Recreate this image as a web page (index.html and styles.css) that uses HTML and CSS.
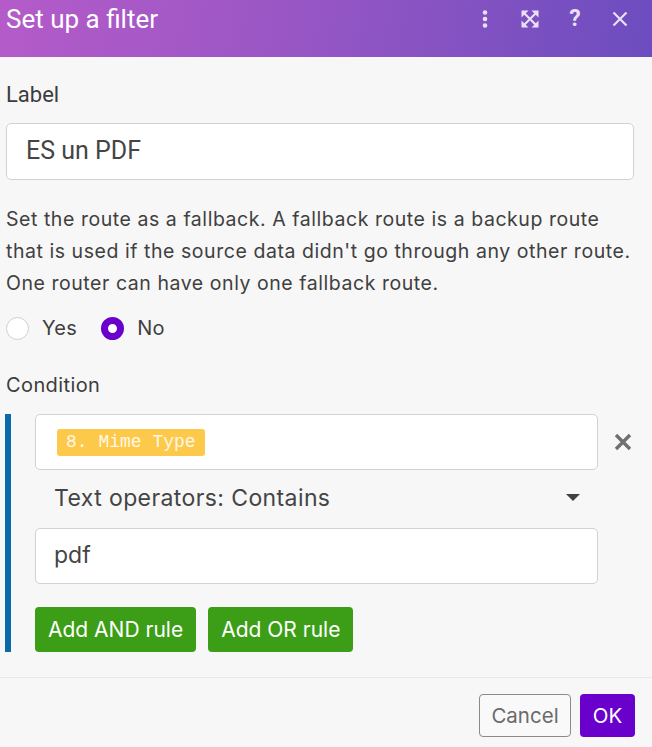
FILE: index.html
```html
<!DOCTYPE html>
<html lang="en">
<head>
<meta charset="utf-8">
<title>Set up a filter</title>
<link rel="stylesheet" href="styles.css">
</head>
<body>
<div class="dialog">
  <header class="header">
    <h1 class="title">Set up a filter</h1>
    <div class="header-icons">
      <span class="hicon">
        <svg width="20" height="20" viewBox="0 0 20 20"><circle cx="10" cy="3.5" r="2.3" fill="currentColor"/><circle cx="10" cy="10" r="2.3" fill="currentColor"/><circle cx="10" cy="16.5" r="2.3" fill="currentColor"/></svg>
      </span>
      <span class="hicon">
        <svg width="20" height="20" viewBox="0 0 20 20"><path d="M4.5 4.5 L15.5 15.5 M15.5 4.5 L4.5 15.5" stroke="currentColor" stroke-width="2.2" fill="none"/><path d="M1.5 1.5 H8.5 L1.5 8.5 Z M18.5 1.5 V8.5 L11.5 1.5 Z M18.5 18.5 H11.5 L18.5 11.5 Z M1.5 18.5 V11.5 L8.5 18.5 Z" fill="currentColor"/></svg>
      </span>
      <span class="hicon q">?</span>
      <span class="hicon">
        <svg width="20" height="20" viewBox="0 0 20 20" fill="none" stroke="currentColor" stroke-width="2.2"><path d="M3.5 3.5 L16.5 16.5 M16.5 3.5 L3.5 16.5"/></svg>
      </span>
    </div>
  </header>

  <main class="content">
    <div class="field-label">Label</div>
    <div class="text-input">ES un PDF</div>

    <p class="help">Set the route as a fallback. A fallback route is a backup route that is used if the source data didn't go through any other route. One router can have only one fallback route.</p>

    <div class="radios">
      <label class="radio"><span class="radio-dot"></span>Yes</label>
      <label class="radio"><span class="radio-dot checked"></span>No</label>
    </div>

    <div class="cond-label">Condition</div>

    <div class="condition">
      <div class="rule-row">
        <div class="rule-field"><span class="tag">8. Mime Type</span></div>
        <button class="remove" type="button" aria-label="Remove">
          <svg width="20" height="20" viewBox="0 0 20 20" fill="none" stroke="currentColor" stroke-width="3.4"><path d="M3 3 L17 17 M17 3 L3 17"/></svg>
        </button>
      </div>
      <div class="operator">
        <span>Text operators: Contains</span>
        <span class="caret"></span>
      </div>
      <div class="rule-value">pdf</div>
      <div class="rule-actions">
        <button class="btn-green" type="button">Add AND rule</button>
        <button class="btn-green" type="button">Add OR rule</button>
      </div>
    </div>
  </main>

  <footer class="footer">
    <button class="btn-cancel" type="button">Cancel</button>
    <button class="btn-ok" type="button">OK</button>
  </footer>
</div>
</body>
</html>
```

FILE: styles.css
```css
* { box-sizing: border-box; }
html, body {
  margin: 0;
  padding: 0;
  background: #f7f7f7;
}
body {
  font-family: Inter, "Noto Sans", sans-serif;
  color: #404040;
  width: 652px;
  height: 747px;
  overflow: hidden;
}
.header {
  height: 57px;
  background: linear-gradient(100deg, #b45bc9 0%, #9c57c5 40%, #6c4dbf 100%);
  display: flex;
  align-items: flex-start;
  justify-content: space-between;
  padding: 1px 22px 0 6px;
  color: #fff;
}
.title {
  margin: 0;
  font-family: Roboto, sans-serif;
  font-weight: 400;
  font-size: 26px;
  line-height: 36px;
}
.header-icons {
  display: flex;
  align-items: center;
  gap: 25px;
  height: 36px;
  color: #eadff7;
}
.hicon {
  width: 20px;
  height: 20px;
  display: flex;
  align-items: center;
  justify-content: center;
}
.hicon.q {
  font-family: Roboto, sans-serif;
  font-weight: 700;
  font-size: 23px;
  line-height: 20px;
}
.content {
  padding: 0 18px 0 6px;
}
.field-label {
  margin-top: 24px;
  font-family: Roboto, sans-serif;
  font-size: 22px;
  line-height: 28px;
  color: #3c3c3c;
}
.text-input {
  margin-top: 14px;
  height: 57px;
  background: #fff;
  border: 1px solid #d2d2d2;
  border-radius: 5px;
  padding: 0 19px 2px;
  display: flex;
  align-items: center;
  font-family: Roboto, sans-serif;
  font-size: 25px;
  color: #454545;
}
.help {
  margin: 23px 0 0;
  font-size: 19.5px;
  line-height: 32px;
  letter-spacing: 0.55px;
  color: #404040;
}
.radios {
  margin-top: 14px;
  display: flex;
  gap: 24px;
  height: 30px;
  align-items: center;
}
.radio {
  display: flex;
  align-items: center;
  gap: 13px;
  font-size: 20px;
  letter-spacing: 0.3px;
  color: #404040;
}
.radio-dot {
  width: 23px;
  height: 23px;
  border-radius: 50%;
  background: #fff;
  border: 1px solid #cfcfcf;
}
.radio-dot.checked {
  border: 7px solid #6a00cc;
  background: #fff;
}
.cond-label {
  margin-top: 28px;
  font-size: 20px;
  line-height: 28px;
  letter-spacing: 0.4px;
  color: #3c3c3c;
}
.condition {
  margin-top: 15px;
  margin-left: -1px;
  margin-right: -18px;
  border-left: 6px solid #0a6aa9;
  padding-left: 24px;
}
.rule-row {
  display: flex;
  align-items: stretch;
}
.rule-field {
  flex: 1;
  height: 56px;
  background: #fff;
  border: 1px solid #d2d2d2;
  border-radius: 5px;
  display: flex;
  align-items: center;
  padding-left: 21px;
}
.tag {
  background: #fdc94b;
  color: #fff8e6;
  font-family: "Liberation Mono", "Courier New", monospace;
  font-size: 18px;
  line-height: 27px;
  padding: 0 9px;
  border-radius: 3px;
}
.remove {
  width: 54px;
  border: 0;
  background: none;
  color: #707070;
  display: flex;
  align-items: flex-start;
  justify-content: center;
  padding: 18px 4px 0 0;
}
.operator {
  height: 58px;
  margin-right: 54px;
  display: flex;
  align-items: center;
  justify-content: space-between;
  padding: 0 18px 3px 19px;
  font-size: 23px;
  letter-spacing: 0.4px;
  color: #444;
}
.caret {
  width: 0;
  height: 0;
  border-left: 7px solid transparent;
  border-right: 7px solid transparent;
  border-top: 7px solid #404040;
}
.rule-value {
  margin-right: 54px;
  height: 56px;
  background: #fff;
  border: 1px solid #d2d2d2;
  border-radius: 5px;
  display: flex;
  align-items: center;
  padding: 0 18px 3px;
  font-size: 23px;
  color: #444;
}
.rule-actions {
  margin-top: 23px;
  display: flex;
  gap: 12px;
}
.btn-green {
  height: 45px;
  padding: 0 13px;
  border: 0;
  border-radius: 4px;
  background: #3c9e16;
  color: #fff;
  font-family: Inter, "Noto Sans", sans-serif;
  font-size: 21px;
}
.footer {
  margin-top: 25px;
  border-top: 1px solid #e9e9e9;
  padding: 16px 17px 0 0;
  display: flex;
  justify-content: flex-end;
  gap: 9px;
}
.btn-cancel {
  height: 43px;
  width: 92px;
  border: 1px solid #8a8a8a;
  border-radius: 4px;
  background: #f9f9f9;
  color: #6a6a6a;
  font-family: Inter, "Noto Sans", sans-serif;
  font-size: 20.5px;
}
.btn-ok {
  height: 43px;
  width: 55px;
  border: 0;
  border-radius: 4px;
  background: #6a00cc;
  color: #fff;
  font-family: Inter, "Noto Sans", sans-serif;
  font-size: 20.5px;
}
```
